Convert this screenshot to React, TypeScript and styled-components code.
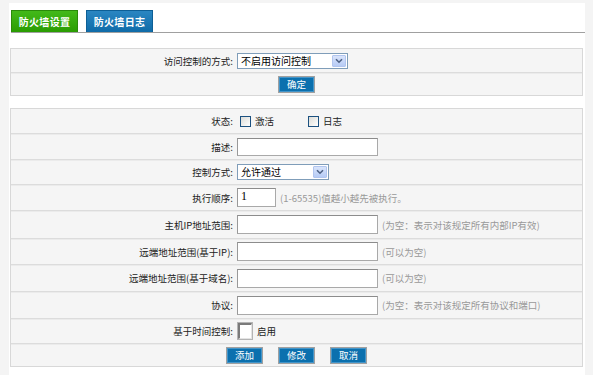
import styled, {createGlobalStyle} from 'styled-components'

const GlobalStyle = createGlobalStyle`
  html, body {
    margin: 0;
    padding: 0;
    background: #f4f4f4;
  }
  body {
    font-family: "Noto Sans CJK SC", "Liberation Sans", sans-serif;
    font-size: 9.5px;
    color: #333;
  }
`

const Panel = styled.div`
  margin: 3px 8px 0 9px;
  background: #fff;
  min-height: 372px;
  padding: 7px 0 0 1px;
  box-sizing: border-box;
`

const TabBar = styled.div`
  display: flex;
  gap: 8px;
  margin-left: 1px;
  border-bottom: 1px solid #a0a0a0;
`

const Tab = styled.div<{$color: 'green' | 'blue'}>`
  width: 67px;
  height: 22px;
  display: flex;
  align-items: center;
  justify-content: center;
  box-sizing: border-box;
  color: #fff;
  font-weight: bold;
  font-size: 10px;
  letter-spacing: 0.3px;
  background: ${(p) =>
    p.$color === 'green'
      ? 'linear-gradient(#43b91a, #2a9c02)'
      : 'linear-gradient(#2a86c2, #0f6ba8)'};
  border: 1px solid ${(p) => (p.$color === 'green' ? '#2a8a0a' : '#0d5f96')};
  border-bottom: none;
`

const Table = styled.div<{$top: number}>`
  margin-top: ${(p) => p.$top}px;
  width: 573px;
  background: #f5f5f5;
  border: 1px solid #d8d8d8;
  box-sizing: border-box;
`

const Row = styled.div<{$h: number; $last?: boolean}>`
  display: grid;
  grid-template-columns: 224px 1fr;
  align-items: center;
  height: ${(p) => p.$h}px;
  box-sizing: border-box;
  border-bottom: ${(p) => (p.$last ? 'none' : '1px solid #dcdcdc')};
  box-shadow: ${(p) => (p.$last ? 'none' : '0 1px 0 #ebebeb')};
`

const CenterRow = styled.div<{$h: number; $last?: boolean}>`
  display: flex;
  justify-content: center;
  align-items: center;
  gap: 15px;
  height: ${(p) => p.$h}px;
  box-sizing: border-box;
  border-bottom: ${(p) => (p.$last ? 'none' : '1px solid #dcdcdc')};
`

const Label = styled.div`
  text-align: right;
  padding-right: 2px;
  color: #222;
  white-space: nowrap;
  line-height: 12px;
`

const Field = styled.div`
  display: flex;
  align-items: center;
  padding-left: 2px;
  gap: 4px;
  white-space: nowrap;
  line-height: 12px;
  color: #222;
`

const TextInput = styled.div<{$w: number; $h: number}>`
  width: ${(p) => p.$w}px;
  height: ${(p) => p.$h}px;
  box-sizing: border-box;
  background: #fff;
  border: 1px solid #a9a9a9;
  border-top-color: #8c8c8c;
  border-left-color: #999;
  font-family: "Liberation Serif", serif;
  font-size: 12px;
  color: #000;
  padding: 1px 3px;
  line-height: 13px;
`

const Hint = styled.span`
  color: #999;
  font-size: 9.5px;
`

const Select = styled.div<{$w: number}>`
  width: ${(p) => p.$w}px;
  height: 16px;
  box-sizing: border-box;
  display: flex;
  align-items: center;
  background: #fff;
  border: 1px solid #7f9db9;
  padding: 1px;
`

const SelectText = styled.span`
  flex: 1;
  padding-left: 2px;
  color: #000;
  font-size: 10px;
  line-height: 12px;
`

const SelectArrow = styled.span`
  width: 14px;
  height: 12px;
  display: flex;
  align-items: center;
  justify-content: center;
  background: linear-gradient(#d9e4fb, #b6cbf5);
  border: 1px solid #b1c5ef;
  box-sizing: border-box;
  border-radius: 1px;
`

const CheckGroup = styled.label<{$gap: number}>`
  display: inline-flex;
  align-items: center;
  gap: 4px;
  margin-right: ${(p) => p.$gap}px;
`

const XpCheck = styled.span`
  width: 9px;
  height: 9px;
  margin-left: 3px;
  border: 1px solid #1c5180;
  background: linear-gradient(135deg, #dcdcd7, #fff);
  display: inline-block;
`

const ClassicCheck = styled.span`
  width: 11px;
  height: 13px;
  margin: 0 1px;
  background: #fff;
  border-top: 2px solid #7a7a7a;
  border-left: 2px solid #7a7a7a;
  border-right: 1px solid #e4e4e4;
  border-bottom: 1px solid #e4e4e4;
  outline: 1px solid #b4b4b4;
  display: inline-block;
`

const Button = styled.button`
  width: 37px;
  height: 17px;
  padding: 0;
  font-family: "Noto Sans CJK SC", "Liberation Sans", sans-serif;
  font-size: 9.5px;
  line-height: 12px;
  color: #fff;
  background: #0b70ae;
  border: 1px solid #a0a0a0;
  box-shadow: inset 0 0 0 1px #4495c9;
  cursor: pointer;
`

const Arrow = () => (
  <svg width="8" height="6" viewBox="0 0 8 6">
    <path d="M1 1.2 L4 4.2 L7 1.2" fill="none" stroke="#4d6185" strokeWidth="1.6" />
  </svg>
)

export default function App() {
  return (
    <>
      <GlobalStyle />
      <Panel>
        <TabBar>
          <Tab $color="green">防火墙设置</Tab>
          <Tab $color="blue">防火墙日志</Tab>
        </TabBar>

        <Table $top={15}>
          <Row $h={24}>
            <Label>访问控制的方式:</Label>
            <Field>
              <Select $w={111}>
                <SelectText>不启用访问控制</SelectText>
                <SelectArrow>
                  <Arrow />
                </SelectArrow>
              </Select>
            </Field>
          </Row>
          <CenterRow $h={22} $last>
            <Button>确定</Button>
          </CenterRow>
        </Table>

        <Table $top={12}>
          <Row $h={25}>
            <Label>状态:</Label>
            <Field>
              <CheckGroup $gap={27}>
                <XpCheck /> 激活
              </CheckGroup>
              <CheckGroup $gap={0}>
                <XpCheck /> 日志
              </CheckGroup>
            </Field>
          </Row>
          <Row $h={26}>
            <Label>描述:</Label>
            <Field>
              <TextInput $w={141} $h={18} />
            </Field>
          </Row>
          <Row $h={25}>
            <Label>控制方式:</Label>
            <Field>
              <Select $w={92}>
                <SelectText>允许通过</SelectText>
                <SelectArrow>
                  <Arrow />
                </SelectArrow>
              </Select>
            </Field>
          </Row>
          <Row $h={26}>
            <Label>执行顺序:</Label>
            <Field>
              <TextInput $w={39} $h={19}>1</TextInput>
              <Hint>(1-65535)值越小越先被执行。</Hint>
            </Field>
          </Row>
          <Row $h={28}>
            <Label>主机IP地址范围:</Label>
            <Field>
              <TextInput $w={141} $h={19} />
              <Hint>(为空：表示对该规定所有内部IP有效)</Hint>
            </Field>
          </Row>
          <Row $h={26}>
            <Label>远端地址范围(基于IP):</Label>
            <Field>
              <TextInput $w={141} $h={19} />
              <Hint>(可以为空)</Hint>
            </Field>
          </Row>
          <Row $h={27}>
            <Label>远端地址范围(基于域名):</Label>
            <Field>
              <TextInput $w={141} $h={19} />
              <Hint>(可以为空)</Hint>
            </Field>
          </Row>
          <Row $h={27}>
            <Label>协议:</Label>
            <Field>
              <TextInput $w={141} $h={19} />
              <Hint>(为空：表示对该规定所有协议和端口)</Hint>
            </Field>
          </Row>
          <Row $h={25}>
            <Label>基于时间控制:</Label>
            <Field>
              <ClassicCheck />
              <span>启用</span>
            </Field>
          </Row>
          <CenterRow $h={22} $last>
            <Button>添加</Button>
            <Button>修改</Button>
            <Button>取消</Button>
          </CenterRow>
        </Table>
      </Panel>
    </>
  )
}
